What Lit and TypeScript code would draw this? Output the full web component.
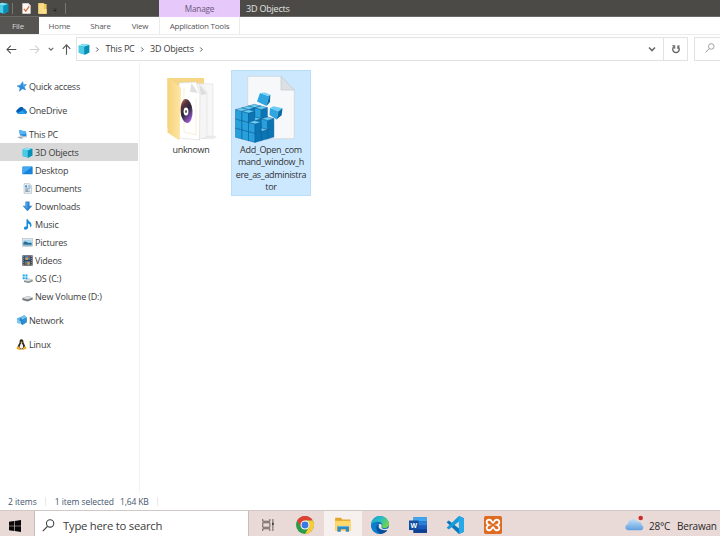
import { LitElement, html, css, svg } from "lit";
import { customElement } from "lit/decorators.js";
import { classMap } from "lit/directives/class-map.js";

const cube = svg`<path d="M1 3.5 6.5 1 15 2.5v10L9.5 15.5 1 13z" fill="#13a6cf"/><path d="M1 3.5 6.5 1 15 2.5 8.5 5z" fill="#8be3f2"/><path d="M1 3.5 8.5 5v10.4L1 13z" fill="#4bcbe4"/><path d="M8.5 5 15 2.5v10l-6.500 2.900z" fill="#078fb8"/>`;

const icons: Record<string, unknown> = {
  cube,
  star: svg`<path d="M9.600 1 10.800 5.300 15.200 5.100 12 8.500 13.800 13 9.500 11.200 5 15 6 9.800 1.500 7.300 6.300 6z" fill="#2b8bdc" stroke="#2b8bdc" stroke-width=".8"/><path d="M9.500 2.500 10.400 6l3 .2-3.200 2z" fill="#6bbcf2"/>`,
  cloud: svg`<path d="M3.600 13A3.600 3.600 0 0 1 3 6.200 4.500 4.500 0 0 1 11 5 3.600 3.600 0 0 1 14.500 8 2.600 2.600 0 0 1 14 13z" fill="#1583d8"/><path d="M3 6.200A4.500 4.500 0 0 1 11 5L8 8.500 1 11A3.500 3.500 0 0 1 3 6.200z" fill="#0759ae"/><path d="M2 12.300 9 8.300l5 4.500z" fill="#2aa5ee"/>`,
  pc: svg`<path d="M4.500 1.500 14.500 3.500 15.500 11 6 9.500z" fill="#248be0"/><path d="M4.500 1.500 14.500 3.500 15 7 5.500 8z" fill="#58b5f2"/><path d="M6 9.500 15.500 11l-.3 1.200L6 10.800z" fill="#a7b7c4"/><path d="M1 12l5-1.300 6 2-4 2.300z" fill="#c3cdd5"/><path d="M3 12.200l3-.6 3 1-2 1z" fill="#8e9ca8"/>`,
  desktop: svg`<rect x=".5" y="2" width="15" height="11.500" rx=".8" fill="#1684dd"/><path d="M1 13 14.500 2.500H1.300z" fill="#42a8f1"/>`,
  documents: svg`<path d="M3 1h8l3 3v11H3z" fill="#edf3f7" stroke="#9daab4" stroke-width=".8"/><path d="M4.500 3.500h3v3h-3z" fill="#348ed0"/><path d="M9 4h3M9 6h4M5 8.300h7M5 12h7" stroke="#5688ad"/><path d="M5 9h4v4H5z" fill="#95a5b2"/>`,
  downloads: svg`<path d="M5 .8h6v6.200h4L8 14.800 1 7h4z" fill="#2c84d2"/><path d="M5.500 1.300h2.500v10L3 7.500h2.500z" fill="#519fe0"/>`,
  music: svg`<path d="M6.500.5h2c.4 3 5.300 3.900 5.300 7.800 0 1.900-.7 3.200-1.900 4.200.4-3.800-.7-5.300-3.100-5.800v5.600c0 3.300-6 4.600-6 1.300 0-2.300 2-3 3.700-2.600z" fill="#148bdc"/>`,
  pictures: svg`<rect x=".5" y="2.500" width="15" height="11" fill="#e6edf2" stroke="#a5b3be" stroke-width=".8"/><path d="M2 4h12v8H2z" fill="#a5d7ef"/><path d="M2 8c3-3 5 0 7 .5 2 .5 3-.5 5 0V12H2z" fill="#2a6b91"/><path d="M2 10.500c3-1 8 .8 12-.2V12H2z" fill="#4c94bd"/>`,
  videos: svg`<path d="M.5.500h15v15H.5z" fill="#384453"/><path d="M4 1h8v6H4z" fill="#477fb9"/><path d="M4 9h8v6H4z" fill="#5079a0"/><path d="M5 4h4v3H5zM8 10h3v4H8z" fill="#d9a242"/><path d="M4 12h3v3H4zM9 1h3v3H9z" fill="#a55044"/><path d="M2 1.500v13M14 1.500v13" stroke="#b5bfca" stroke-width="1.200" stroke-dasharray="1.300 1.700"/>`,
  osdrive: svg`<path d="M1 2.200h3v3H1zM5 2.200h3v3H5zM1 6.200h3v3H1zM5 6.200h3v3H5z" fill="#16a7e7"/><path d="M3 11l7-3 5.500 1.700v2.600L9.500 14.500 3 13z" fill="#858b90"/><path d="M3 11l7-3 5.500 1.700L9 12.300z" fill="#d7dadd"/><path d="M12 12.600l1.500-.6" stroke="#65d78b"/>`,
  drive: svg`<path d="M.5 10.300l8-3 7 2v3.200L8 15.300.5 13z" fill="#74797e"/><path d="M.5 10.300l8-3 7 2L8 12.400z" fill="#dadcde"/>`,
  network: svg`<path d="M1 5 7 2.500l1.500 8L2.500 12z" fill="#61b2e6"/><path d="M6 3.500 12 .5l3.500 3v7L9 14.500 5.500 11z" fill="#2581c3"/><path d="M6 3.500 12 .5l3.500 3L9.500 7z" fill="#72c3ee"/><path d="M2 6l6 4-3 3-4-2z" fill="#80c9ef"/><path d="M9.500 7 15.500 3.500v7L9 14.500z" fill="#2b91d2"/>`,
  linux: svg`<path d="M5.300 4C5.200 1.300 6.200.3 8 .3s2.900 1.100 2.800 4c0 2 3.200 4.500 2.700 9L10 15H6l-3.800-2C2 9 5.500 7 5.300 4z" fill="#252525"/><path d="M8 5.500c1.500 2 3 4 2.300 7.500L8 14l-2.700-1.200C5 9.500 6.500 8 8 5.500z" fill="#f4f2eb"/><path d="M6.200 4.500 8 3.600l2 .9L8 6zM1 12l2.500-1.500L7 14.500 5.500 16 1 14.500zM15 12l-2.500-1.500L9.500 14l1 2 4.500-2z" fill="#efad25"/>`,
  check: svg`<path d="M2 .500h9l3 3v12H2z" fill="#fff9f5"/><path d="m4.200 8.500 2.700 3.300 5-7" fill="none" stroke="#d77146" stroke-width="2"/><path d="M11 .5v3h3" fill="#cfc7c1"/>`,
  folder: svg`<path d="M2 .500h8.500v1H14V15.500H2z" fill="#f1c85d"/><path d="M5.500 9H14v6.500H4z" fill="#ffe08a"/><path d="M2 .5h8v9L5 15.500H2z" fill="#f8db86"/>`,
  dropdown: svg`<path d="M1 3.500h14" stroke="#262523" stroke-width="2"/><path d="M1 8h14l-7 6z" fill="#1d1c1b"/>`,
  back: svg`<path d="M15 8H1.500M7 2.500 1.500 8 7 13.500" fill="none" stroke="#4a4a4a" stroke-width="1.500"/>`,
  forward: svg`<path d="M1 8h13.500M9 2.500 14.500 8 9 13.500" fill="none" stroke="#cfcfcf" stroke-width="1.500"/>`,
  up: svg`<path d="M8 15.500V1M2.500 7 8 1.200 13.500 7" fill="none" stroke="#555" stroke-width="1.600"/>`,
  down: svg`<path d="M2 5l6 6 6-6" fill="none" stroke="#6b6b6b" stroke-width="3.200"/>`,
  right: svg`<path d="M4 1.500 10.500 8 4 14.500" fill="none" stroke="#555" stroke-width="3.200"/>`,
  refresh: svg`<path d="M5 4.200A5.200 5.200 0 1 0 11 4.200" fill="none" stroke="#666" stroke-width="2.200"/><path d="M2 2.800h4v4.700M11 8V3.200h3" fill="none" stroke="#666" stroke-width="1.700"/>`,
  lens: svg`<circle cx="10" cy="5.500" r="4.500" fill="none" stroke="currentColor" stroke-width="1.300"/><path d="M6.700 9 1 15" stroke="currentColor" stroke-width="1.400"/>`,
  windows: svg`<path d="M0 2.300 6.700 1.300V7.500H0zM7.500 1.200 16 0v7.500H7.500zM0 8.400h6.700v6.200L0 13.700zM7.500 8.400H16V16l-8.500-1.200z" fill="#090707"/>`,
  tasks: svg`<path d="M1 0v3h9.500V0M1 16v-3h9.500v3M1 5h9.500v6H1zM14.500 0v16" fill="none" stroke="#5a504f" stroke-width="1.200"/><path d="M13.300 5h2.400v3h-2.400z" fill="#4a4241"/>`,
  chrome: svg`<circle cx="8" cy="8" r="8" fill="#2c9b4a"/><path d="M1.070 4A8 8 0 0 1 14.930 4H8L4.500 10z" fill="#df4034"/><path d="M14.930 4A8 8 0 0 1 8 16l3.500-6L8 4z" fill="#f8ca38"/><circle cx="8" cy="8" r="4" fill="#fff"/><circle cx="8" cy="8" r="3.100" fill="#3979e3"/>`,
  explorer: svg`<path d="M1 1.500h5.300l1 1.500H14.500V13H1z" fill="#e5a62d"/><path d="M1 4.300H15v9H1z" fill="#ffd969"/><path d="M3 14V8.800h10.300V14h-2.800v-2.300H6V14z" fill="#3387c5"/><path d="M3 8.800h10.300v1H3z" fill="#65b5e1"/>`,
  edge: svg`<defs><linearGradient id="eg" x1="0" y1="0" x2="1" y2=".6"><stop stop-color="#199bd8"/><stop offset=".5" stop-color="#25bdc4"/><stop offset="1" stop-color="#70d54a"/></linearGradient></defs><circle cx="8" cy="8" r="8" fill="#136fbe"/><path d="M0 8C.5 3 3.700 0 8 0c5 0 8 3.500 8 7 0 4-5.500 4.500-6.500 2.500C11 7.500 9.500 5 6.500 5 3.500 5 1 6 0 8z" fill="url(#eg)"/><path d="M5.200 6.500C3.500 10 6 14.500 10 15.500 6 16.800 1 14.500.300 10 0 7 2.500 5 6 5z" fill="#0a7fd0"/><path d="M6.500 7.500C5 11 9 14.200 15 11.800c-2 3.300-4.500 4.200-7 4-3.200-2-4.500-6.500-1.500-8.300z" fill="#0b4c98"/><path d="M7 7.300c2-.8 3.300.7 2.300 2.200-.4 2 3 2.500 5.700 1.700 1-.6 2-.5 1.500.8-2.500 1.200-8.300.700-9.500-1.700z" fill="#eae3e0"/>`,
  word: svg`<path d="M4 1h12v14H4z" fill="#185abd"/><path d="M4 1h12v3.800H4z" fill="#43a5ee"/><path d="M4 4.800h12v3.500H4z" fill="#2b7cd3"/><path d="M4 11.800h12V15H4z" fill="#103f91"/><path d="M0 4h8.500v8.500H0z" fill="#134d9f"/><text x="4.250" y="10.500" text-anchor="middle" font-family="Liberation Sans" font-weight="700" font-size="6.200" fill="#fff">W</text>`,
  code: svg`<path d="M11.500 0 16 2v12l-4.500 2L.5 5.600l2-1.500 9 7z" fill="#0877bc"/><path d="M11.500 4.800 2.500 12l-2-1.600L11.500 0z" fill="#169bda"/><path d="M11.500 0 16 2v12l-4.500 2z" fill="#27a8e8"/>`,
  xampp: svg`<rect width="16" height="16" rx="1.500" fill="#dd6b21"/><path d="M5.500 3.500C1.500 2.500 1.500 7 4.500 8c-3 1-3 5.500 1 4.500C7 12 7 10 8 10s1 2 2.500 2.500c4 1 4-3.500 1-4.500 3-1 3-5.500-1-4.500C9 4 9 6 8 6S7 4 5.500 3.500z" fill="none" stroke="#fff" stroke-width="1.600"/>`,
  weather: svg`<defs><linearGradient id="wg" x2="0" y2="1"><stop stop-color="#c4dff7"/><stop offset="1" stop-color="#5e9fe0"/></linearGradient></defs><path d="M3 12C-.5 12-.5 7.300 2.500 7c0-5 6.500-6 8-2 3-.5 3.500 2 3.500 2.500 2.500 1 1.500 4.500-1 4.500z" fill="url(#wg)"/><circle cx="13.200" cy="1.700" r="1.900" fill="#c92d2b"/>`,
};

@customElement("ui-icon")
class UiIcon extends LitElement {
  static properties = { name: {}, size: { type: Number } };
  declare name: string;
  declare size: number;
  static styles = css`:host { display: inline-flex; flex: none; } svg { display: block; overflow: visible; }`;
  render() {
    const s = this.size || 11;
    return html`<svg width=${s} height=${s} viewBox="0 0 16 16">${icons[this.name]}</svg>`;
  }
}

const folderArt = svg`<svg class="art" width="80" height="74" viewBox="-9 0 80 74">
  <defs><linearGradient id="ff" x2="1"><stop stop-color="#f6d37c"/><stop offset="1" stop-color="#ffe6a4"/></linearGradient>
  <linearGradient id="disc" x2=".5" y2="1"><stop stop-color="#ee8156"/><stop offset=".3" stop-color="#5c3440"/><stop offset=".6" stop-color="#2b2735"/><stop offset="1" stop-color="#9558cc"/></linearGradient></defs>
  <path d="M40 66h17l-3 3H36z" fill="#ececec"/><path d="M7.500 8H44v12L20 60 7.500 58z" fill="#f6d684"/>
  <path d="M36 13.500 53 14v52l-14 1z" fill="#f7f7f7" stroke="#dcdcdc" stroke-width=".6"/><path d="M46 28v32" stroke="#f3e2b8" stroke-width=".7"/>
  <path d="M22 12.500 41 14l6 9v44l-7 2-18-3z" fill="#f5f5f5" stroke="#dadada" stroke-width=".5"/><path d="m39 14 8 10-6 1z" fill="#dddddd"/>
  <path d="M19 13l17-1 4 12-.5 46L19 68z" fill="#fff" stroke="#d8d8d8" stroke-width=".6"/><path d="M24 18v44l12 3V28" fill="none" stroke="#f3e5bf" stroke-width=".6"/><path d="m31.500 13 6.500 10-8-1z" fill="#e0e0e0"/>
  <ellipse cx="26.500" cy="41" rx="6" ry="12" fill="url(#disc)" transform="rotate(-4 26.500 41)"/><ellipse cx="26" cy="41.500" rx="2.400" ry="4" fill="#fff"/><ellipse cx="26" cy="41.500" rx=".8" ry="1.500" fill="#333"/>
  <path d="M7.500 8 20 17q1 1 1 3l-1.500 50.500L7.500 62.500z" fill="url(#ff)"/></svg>`;

/* Column heights of the registry block stack, ordered from the back to the front. */
const stack: [number, number, number][] = [
  [2, 2, 3], [2, 1, 3], [1, 2, 3], [2, 0, 3], [1, 1, 2], [0, 2, 2], [1, 0, 3], [0, 1, 1], [0, 0, 2],
];
const block = (l: number, r: number, z: number) => {
  const x = 24 - 6.5 * l + 6.3 * r;
  const y = 74.4 - 1.7 * l - 1.8 * r - 9.2 * z;
  return svg`<g transform="translate(${x} ${y})" stroke="#0b5f94" stroke-width=".45" stroke-linejoin="round"><path d="M0 0-6.500-1.700v-9.200L0-9.200z" fill="#27a0dc"/><path d="M0 0l6.300-1.800V-11L0-9.200z" fill="#0b74b4"/><path d="M0-9.200l-6.500-1.700 6.300-1.800L6.300-11z" fill="#6cccf3"/></g>`;
};

const registryArt = svg`<svg class="art" width="80" height="74" viewBox="0 2 80 74">
  <path d="M16.700 8.300H50L63.300 22v48.700H16.700z" fill="#f6f8fa" stroke="#c5ccd2" stroke-width=".6"/><path d="M50 8.300V22h13.300z" fill="#dce0e4" stroke="#bec5cb" stroke-width=".6"/>
  ${stack.map(([l, r, h]) => Array.from({ length: h }, (_, z) => block(l, r, z)))}
  <path d="m29 25 9 3.300L35.500 38 26 33.500z" fill="#2fa6df"/><path d="m29 25 5-.6 5.500 2.600-1.500 1.300z" fill="#77d3f7"/><path d="m38 28.300 1.300-1.500L39 34l-3.500 4z" fill="#086ca8"/>
  <path d="m39 40 8.500 3.200L45.500 51.500 38.500 47z" fill="#2fa6df"/><path d="m39 40 3.500-1.800 9 2-4 3z" fill="#68cbf5"/><path d="m47.500 43.200 4-3-.8 7-5.200 4.300z" fill="#086ca8"/></svg>`;

interface NavEntry { icon: string; label: string; child?: boolean; selected?: boolean; }
const nav: NavEntry[][] = [
  [{ icon: "star", label: "Quick access" }],
  [{ icon: "cloud", label: "OneDrive" }],
  [
    { icon: "pc", label: "This PC" },
    { icon: "cube", label: "3D Objects", child: true, selected: true },
    { icon: "desktop", label: "Desktop", child: true },
    { icon: "documents", label: "Documents", child: true },
    { icon: "downloads", label: "Downloads", child: true },
    { icon: "music", label: "Music", child: true },
    { icon: "pictures", label: "Pictures", child: true },
    { icon: "videos", label: "Videos", child: true },
    { icon: "osdrive", label: "OS (C:)", child: true },
    { icon: "drive", label: "New Volume (D:)", child: true },
  ],
  [{ icon: "network", label: "Network" }],
  [{ icon: "linux", label: "Linux" }],
];

@customElement("app-root")
class AppRoot extends LitElement {
  static styles = css`
    :host { display: flex; flex-direction: column; width: 720px; height: 536px; overflow: hidden; background: #fff; color: #3c3c3c; font: 9px/18px "Open Sans", "Noto Sans", sans-serif; letter-spacing: -0.2px; white-space: nowrap; }
    * { box-sizing: border-box; }
    .title { display: flex; height: 17px; flex: none; background: #4b4a47; border-bottom: 1px solid #6a6967; color: #e4e4e3; line-height: 17px; }
    .quick { display: flex; align-items: center; width: 159px; flex: none; }
    .quick .a { margin-left: -3px; } .quick .b { margin-left: 8px; } .quick .c { margin-left: 5px; } .quick .d { margin-left: 5px; margin-top: 3px; }
    .bar { width: 1px; height: 11px; background: #777673; margin-left: 3px; } .bar.far { margin-left: 8px; }
    .manage { width: 81px; height: 17px; background: #e6c8fb; color: #6b5778; text-align: center; font-size: 8.200px; letter-spacing: -.2px; }
    .wintitle { padding-left: 6px; }
    .tabs { display: flex; height: 18px; flex: none; border-bottom: 1px solid #ececec; font-size: 8px; line-height: 17px; color: #555; }
    .tab { text-align: center; }
    .file { width: 39px; height: 17px; background: #575552; color: #d8d8d8; padding-right: 3px; } .home { width: 41px; } .share { width: 41px; } .view { width: 38px; }
    .tools { width: 81px; border: solid #ececec; border-width: 0 1px; letter-spacing: -.25px; }
    .address { display: flex; height: 26px; margin-top: 2px; flex: none; }
    .arrows { display: flex; align-items: center; width: 76px; height: 24px; padding-left: 6px; }
    .arrows .f { margin-left: 12px; } .arrows .d { margin-left: 8px; } .arrows .u { margin-left: 7px; }
    .path { display: flex; align-items: center; width: 588px; height: 24px; border: 1px solid #e2e2e2; padding-left: 1px; }
    .path .s { margin: 0 5.500px 0 5px; } .path .end { margin-right: auto; } .path .open { margin-right: 7px; }
    .refresh { display: flex; align-items: center; justify-content: center; width: 24px; height: 24px; border: 1px solid #e2e2e2; border-left: 0; }
    .find { width: 26px; height: 24px; margin-left: 6px; padding: 5px 0 0 10px; border: 1px solid #e2e2e2; border-right: 0; color: #8c8c8c; line-height: 0; }
    .main { display: flex; flex: 1; min-height: 0; }
    .side { width: 140px; padding-top: 14px; border-right: 1px solid #f3f3f3; display: flex; flex-direction: column; gap: 6px; }
    .row { display: flex; align-items: center; height: 18px; width: 138px; padding: 1px 0 0 16px; gap: 2px; }
    .row.child { padding-left: 22px; } .row.selected { background: #d9d9d9; }
    .files { display: flex; align-items: flex-start; padding: 7px 0 0 11px; }
    .tile { width: 80px; height: 126px; font-size: 9px; line-height: 12.400px; text-align: center; letter-spacing: -.33px; color: #333; }
    .tile.on { background: #cce8ff; box-shadow: inset 0 0 0 1px #b8defa; }
    .art { display: block; overflow: visible; }
    .status { display: flex; height: 17px; flex: none; padding-left: 8px; align-items: center; color: #44566f; font-size: 8.500px; letter-spacing: -.04px; }
    .rule { width: 1px; height: 9px; background: #e8e8e8; margin: 0 8.500px; } .size { margin-left: 6px; letter-spacing: -.15px; }
    .taskbar { display: flex; height: 26px; flex: none; background: #e9dad8; border-top: 1px solid #cfc8c7; align-items: stretch; color: #292727; }
    .start { width: 34px; display: flex; align-items: center; padding: 4px 0 0 9px; }
    .search { width: 215px; border: 1px solid #c3bfbf; border-width: 0 1px; background: #fff; display: flex; align-items: center; padding: 4px 0 0 7px; gap: 8px; font-size: 11.300px; letter-spacing: -.25px; color: #3b3b3b; }
    .app { width: 37.500px; display: flex; align-items: center; justify-content: center; padding-top: 3px; } .app.active { background: #f6f0ee; }
    .weather { margin-left: auto; width: 95px; display: flex; align-items: center; padding-top: 4px; font-size: 10px; }
    .temp { margin-left: 5px; width: 28px; }
  `;
  render() {
    const i = (name: string, size = 11, cls = "") => html`<ui-icon class=${cls} name=${name} .size=${size}></ui-icon>`;
    return html`
      <header class="title"><div class="quick">${i("cube", 12, "a")}<span class="bar"></span>${i("check", 11, "b")}${i("folder", 11, "c")}${i("dropdown", 4, "d")}<span class="bar far"></span></div><div class="manage">Manage</div><div class="wintitle">3D Objects</div></header>
      <nav class="tabs"><span class="tab file">File</span><span class="tab home">Home</span><span class="tab share">Share</span><span class="tab view">View</span><span class="tab tools">Application Tools</span></nav>
      <div class="address">
        <div class="arrows">${i("back", 11)}${i("forward", 11, "f")}${i("down", 6, "d")}${i("up", 11, "u")}</div>
        <div class="path">${i("cube", 12)}${i("right", 5, "s")}<span>This PC</span>${i("right", 5, "s")}<span>3D Objects</span>${i("right", 5, "s end")}${i("down", 8, "open")}</div>
        <div class="refresh">${i("refresh", 10)}</div><div class="find">${i("lens", 10)}</div>
      </div>
      <main class="main">
        <aside class="side">${nav.map(g => html`<div>${g.map(e => html`<div class=${classMap({ row: true, child: !!e.child, selected: !!e.selected })}>${i(e.icon)}<span>${e.label}</span></div>`)}</div>`)}</aside>
        <section class="files">
          <div class="tile">${folderArt}<div>unknown</div></div>
          <div class="tile on">${registryArt}<div>Add_Open_com<br>mand_window_h<br>ere_as_administra<br>tor</div></div>
        </section>
      </main>
      <footer class="status"><span>2 items</span><span class="rule"></span><span>1 item selected</span><span class="size">1,64 KB</span><span class="rule"></span></footer>
      <footer class="taskbar"><div class="start">${i("windows", 12)}</div><div class="search">${i("lens", 13)}<span>Type here to search</span></div>
        ${["tasks", "chrome", "explorer", "edge", "word", "code", "xampp"].map(n => html`<div class=${classMap({ app: true, active: n === "explorer" })}>${i(n, n === "tasks" ? 12 : 18)}</div>`)}
        <div class="weather">${i("weather", 19)}<span class="temp">28°C</span><span>Berawan</span></div></footer>`;
  }
}
